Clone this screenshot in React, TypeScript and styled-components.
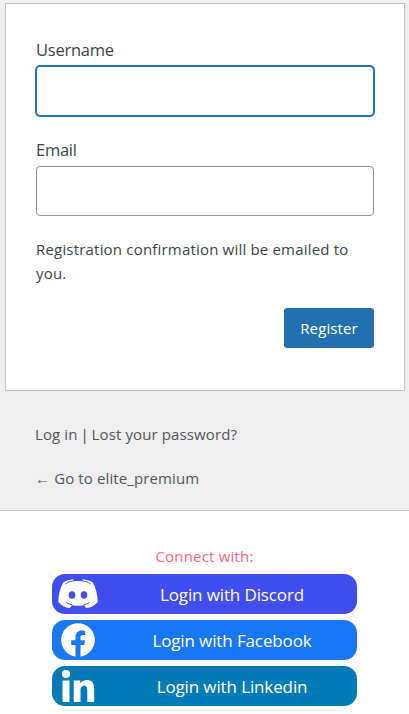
import React from "react";
import styled, { createGlobalStyle } from "styled-components";

const GlobalStyle = createGlobalStyle`
  *, *::before, *::after { box-sizing: border-box; }
  body {
    margin: 0;
    background: #fff;
    color: #3c434a;
    font-family: "Open Sans", "Noto Sans", sans-serif;
    font-size: 15px;
  }
`;

const Page = styled.main`
  height: 714px;
  overflow: hidden;
`;

const LoginArea = styled.section`
  height: 511px;
  padding: 3px 4px 0 5px;
  background: #efefef;
  border-bottom: 1px solid #c3c4c7;
`;

const Card = styled.form`
  height: 388px;
  padding: 34px 30px 0;
  background: #fff;
  border: 1px solid #c3c4c7;
  box-shadow: 0 1px 3px rgba(0, 0, 0, 0.04);
`;

const Label = styled.label`
  display: block;
  height: 28px;
  font-size: 16.5px;
  line-height: 24px;
  letter-spacing: -0.25px;
`;

const Input = styled.input<{ $active?: boolean }>`
  display: block;
  width: 338px;
  height: 50px;
  margin-bottom: 22px;
  padding: 0 8px;
  background: #fff;
  border: 1px solid ${(p) => (p.$active ? "#2271b1" : "#8c8f94")};
  border-radius: 4px;
  box-shadow: ${(p) => (p.$active ? "0 0 0 1px #2271b1" : "none")};
  outline: none;
  font: inherit;
`;

const Note = styled.p`
  margin: -1px 0 23px;
  line-height: 24px;
  letter-spacing: 0.19px;
  white-space: nowrap;
`;

const Submit = styled.button`
  display: block;
  width: 90px;
  height: 40px;
  margin-left: auto;
  padding: 0;
  border: 0;
  border-radius: 3px;
  background: #2271b1;
  color: #fff;
  font: inherit;
  letter-spacing: 0.1px;
`;

const Nav = styled.nav`
  padding: 31px 0 0 30px;
`;

const NavRow = styled.p`
  display: flex;
  margin: 0 0 20px;
  line-height: 24px;
  white-space: pre;
`;

const Separator = styled.span`
  width: 14px;
  text-align: center;
`;

const Link = styled.a`
  color: #50575e;
  text-decoration: none;
  letter-spacing: 0.12px;
`;

const Social = styled.section`
  display: flex;
  flex-direction: column;
  align-items: center;
  gap: 6px;
  padding: 33px 0 0;
`;

const Heading = styled.p`
  margin: 0;
  color: #ff6781;
  line-height: 24px;
  letter-spacing: 0.2px;
`;

const SocialButton = styled.a<{ $color: string }>`
  display: flex;
  align-items: center;
  width: 305px;
  height: 40px;
  padding-left: 6px;
  border-radius: 13px;
  background: ${(p) => p.$color};
  color: #fff;
  text-decoration: none;
`;

const SocialLabel = styled.span`
  flex: 1;
  padding-left: 9px;
  text-align: center;
  font-size: 17px;
  letter-spacing: -0.12px;
`;

const Icon = styled.svg`
  display: block;
  width: 40px;
  height: 40px;
  flex: none;
`;

function DiscordIcon({ color }: { color: string }) {
  return (
    <Icon viewBox="0 0 40 40">
      <path fill="#fff" d="M15.2 5.2 C11 5.6 7.5 7 5 8.8 C2 14.5 .4 21 .3 28 C3 31.5 7 33.6 11.8 34 L14 31.2 C18 32 22 32 26 31.2 L28.2 34 C33 33.6 37 31.5 39.7 28 C39.6 21 38 14.5 35 8.8 C32.5 7 29 5.6 24.8 5.2 L23.9 7.2 C21.3 6.9 18.7 6.9 16.1 7.2 Z" />
      <path fill="none" stroke={color} strokeWidth="1" d="M7.5 9.8 C10 8.1 12.8 7.1 16.1 6.8 M32.5 9.8 C30 8.1 27.2 7.1 23.9 6.8 M8.3 28.4 C10 29.5 12 30.4 14.3 31 M31.7 28.4 C30 29.5 28 30.4 25.7 31" />
      <ellipse cx="14" cy="21" rx="3.3" ry="3.7" fill={color} />
      <ellipse cx="26" cy="21" rx="3.3" ry="3.7" fill={color} />
    </Icon>
  );
}

function FacebookIcon({ color }: { color: string }) {
  return (
    <Icon viewBox="0 0 40 40">
      <circle cx="20" cy="20" r="16.8" fill="#fff" />
      <path fill={color} d="M17.5 37V25H13.2V20.2H17.5V17C17.5 12.9 20 10.5 23.8 10.5C25.7 10.5 27.2 10.8 27.2 10.8V14.9H25.2C23.2 14.9 22.5 16.1 22.5 17.5V20.2H27L26.3 25H22.5V37Z" />
    </Icon>
  );
}

function LinkedinIcon() {
  return (
    <Icon viewBox="0 0 40 40" fill="#fff">
      <circle cx="8" cy="8" r="4.1" />
      <path d="M4.5 14.5H11.5V36H4.5ZM15.7 14.5H22.3V17.4C23.5 15.2 26 13.9 29 13.9C35 13.9 36.2 18 36.2 23.5V36H29.3V25C29.3 22 29 19.7 26.1 19.7C23.2 19.7 22.5 22 22.5 24.8V36H15.7Z" />
    </Icon>
  );
}

export default function App() {
  return (
    <Page>
      <GlobalStyle />
      <LoginArea>
        <Card>
          <Label htmlFor="user">Username</Label>
          <Input id="user" $active />
          <Label htmlFor="email">Email</Label>
          <Input id="email" type="email" />
          <Note>Registration confirmation will be emailed to<br />you.</Note>
          <Submit type="button">Register</Submit>
        </Card>
        <Nav>
          <NavRow><Link>Log in</Link><Separator>|</Separator><Link>Lost your password?</Link></NavRow>
          <NavRow><Link>← Go to elite_premium</Link></NavRow>
        </Nav>
      </LoginArea>
      <Social>
        <Heading>Connect with:</Heading>
        <SocialButton $color="#404eed">
          <DiscordIcon color="#404eed" />
          <SocialLabel>Login with Discord</SocialLabel>
        </SocialButton>
        <SocialButton $color="#1877f2">
          <FacebookIcon color="#1877f2" />
          <SocialLabel>Login with Facebook</SocialLabel>
        </SocialButton>
        <SocialButton $color="#007bb6">
          <LinkedinIcon />
          <SocialLabel>Login with Linkedin</SocialLabel>
        </SocialButton>
      </Social>
    </Page>
  );
}
